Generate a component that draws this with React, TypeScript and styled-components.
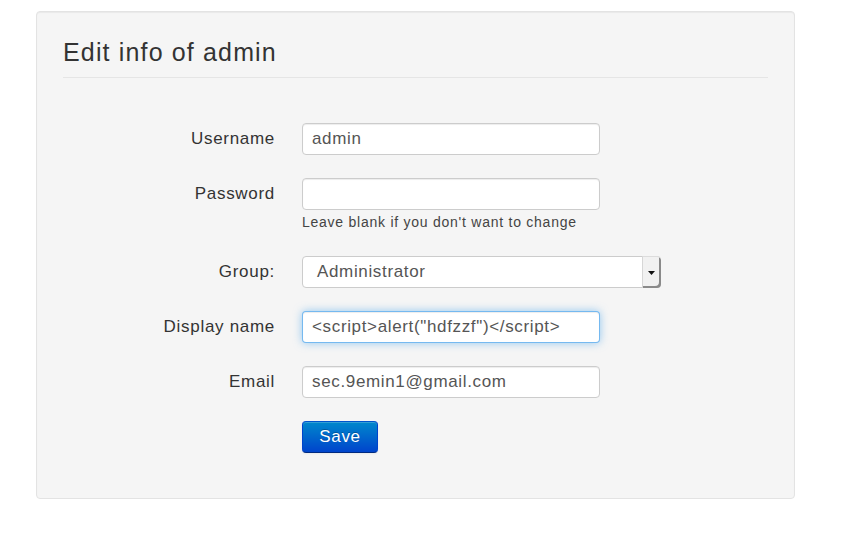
import React from "react";
import styled, { createGlobalStyle } from "styled-components";

const Global = createGlobalStyle`
  html, body { margin: 0; padding: 0; background: #ffffff; }
  body { font-family: "Liberation Sans", Arial, sans-serif; }
`;

const Page = styled.div`
  padding: 11px 0 0 36px;
`;

const Well = styled.div`
  box-sizing: border-box;
  width: 759px;
  height: 488px;
  background: #f5f5f5;
  border: 1px solid #e3e3e3;
  border-radius: 4px;
  box-shadow: inset 0 1px 1px rgba(0, 0, 0, 0.05);
  padding: 15px 26px 0 26px;
`;

const Legend = styled.div`
  font-size: 25px;
  line-height: 50px;
  letter-spacing: 1.15px;
  color: #333333;
  border-bottom: 1px solid #e5e5e5;
  margin-bottom: 45px;
`;

const Form = styled.div`
  display: grid;
  grid-template-columns: 212px 1fr;
  column-gap: 27px;
  row-gap: 23px;
  align-items: start;
`;

const Label = styled.div`
  text-align: right;
  font-size: 17px;
  letter-spacing: 0.7px;
  line-height: 20px;
  padding-top: 6px;
  color: #333333;
`;

const Controls = styled.div`
  display: flex;
  flex-direction: column;
  align-items: flex-start;
`;

const Input = styled.div<{ $focused?: boolean }>`
  box-sizing: border-box;
  width: 298px;
  height: 32px;
  padding: 0 9px;
  line-height: 30px;
  font-size: 17px;
  letter-spacing: 0.65px;
  color: #555555;
  background: #ffffff;
  border: 1px solid ${(p) => (p.$focused ? "rgba(82,168,236,0.8)" : "#cccccc")};
  border-radius: 4px;
  white-space: nowrap;
  overflow: hidden;
  box-shadow: ${(p) =>
    p.$focused
      ? "inset 0 1px 1px rgba(0,0,0,.075), 0 0 8px rgba(82,168,236,.6)"
      : "inset 0 1px 1px rgba(0,0,0,.075)"};
`;

const Help = styled.div`
  margin-top: 2px;
  font-size: 14px;
  letter-spacing: 0.75px;
  line-height: 21px;
  color: #444444;
`;

const Select = styled.div`
  box-sizing: border-box;
  position: relative;
  width: 359px;
  height: 32px;
  padding: 0 14px;
  line-height: 30px;
  font-size: 17px;
  letter-spacing: 0.65px;
  color: #555555;
  background: #ffffff;
  border: 1px solid #cccccc;
  border-radius: 4px;
`;

const SelectButton = styled.div`
  position: absolute;
  top: -1px;
  right: -1px;
  bottom: -1px;
  width: 19px;
  box-sizing: border-box;
  background: #f1f1f1;
  border-left: 1px solid #d6d6d6;
  border-top: 1px solid #dcdcdc;
  border-radius: 0 4px 4px 0;
  box-shadow: inset -2px -2px 0 #8a8a8a;
  display: flex;
  align-items: center;
  justify-content: center;
  padding-right: 2px;
`;

const Button = styled.div`
  box-sizing: border-box;
  width: 76px;
  height: 32px;
  line-height: 30px;
  text-align: center;
  font-size: 17px;
  letter-spacing: 0.7px;
  color: #ffffff;
  text-shadow: 0 -1px 0 rgba(0, 0, 0, 0.25);
  background: linear-gradient(to bottom, #0088cc, #0044cc);
  border: 1px solid #0044cc;
  border-color: #0055cc #0044cc #002a80;
  border-radius: 4px;
  box-shadow: inset 0 1px 0 rgba(255, 255, 255, 0.2), 0 1px 2px rgba(0, 0, 0, 0.05);
`;

export default function App() {
  return (
    <>
      <Global />
      <Page>
        <Well>
          <Legend>Edit info of admin</Legend>
          <Form>
            <Label>Username</Label>
            <Controls>
              <Input>admin</Input>
            </Controls>

            <Label>Password</Label>
            <Controls>
              <Input />
              <Help>Leave blank if you don't want to change</Help>
            </Controls>

            <Label>Group:</Label>
            <Controls>
              <Select>
                Administrator
                <SelectButton>
                  <svg width="7" height="4" viewBox="0 0 7 4">
                    <path d="M0 0 H7 L3.5 4 Z" fill="#111" />
                  </svg>
                </SelectButton>
              </Select>
            </Controls>

            <Label>Display name</Label>
            <Controls>
              <Input $focused>{'<script>alert("hdfzzf")</script>'}</Input>
            </Controls>

            <Label>Email</Label>
            <Controls>
              <Input>sec.9emin1@gmail.com</Input>
            </Controls>

            <div />
            <Controls>
              <Button>Save</Button>
            </Controls>
          </Form>
        </Well>
      </Page>
    </>
  );
}
